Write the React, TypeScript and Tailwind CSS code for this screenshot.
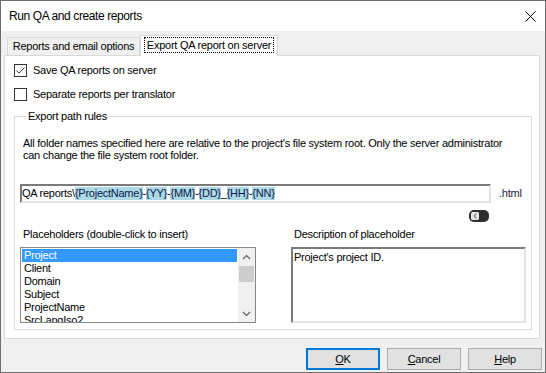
import React from "react";

function Check({ checked }: { checked?: boolean }) {
  return (
    <div className="w-[13px] h-[13px] border border-[#333333] bg-white flex items-center justify-center shrink-0">
      {checked && (
        <svg width="11" height="11" viewBox="0 0 11 11">
          <path d="M1.5 5.5 L4 8 L9.5 2.5" fill="none" stroke="#333333" strokeWidth="1" />
        </svg>
      )}
    </div>
  );
}

function Token({ t }: { t: string }) {
  return <span className="bg-[#add8e6] text-[#0a1a4a]">{t}</span>;
}

export default function App() {
  const items = ["Project", "Client", "Domain", "Subject", "ProjectName", "SrcLangIso2"];
  return (
    <div className="w-[546px] h-[373px] border border-[#6e6e6e] bg-[#f0f0f0] flex flex-col overflow-hidden font-['Liberation_Sans',Arial,sans-serif] text-[11px] leading-[13px] tracking-[-0.25px] text-black">
      {/* Title bar */}
      <div className="h-[30px] bg-white flex items-center justify-between pl-[8px] pr-[9px] shrink-0">
        <span className="text-[12px] tracking-[-0.4px]">Run QA and create reports</span>
        <svg width="11" height="11" viewBox="0 0 11 11">
          <path d="M0.5 0.5 L10.5 10.5 M10.5 0.5 L0.5 10.5" stroke="#000" strokeWidth="1" />
        </svg>
      </div>

      {/* Tabs */}
      <div className="mt-[4px] ml-[3px] flex items-end h-[20px] relative z-10 shrink-0">
        <div className="ml-[3px] w-[133px] h-[18px] border border-b-0 border-[#d9d9d9] bg-[#f0f0f0] flex items-center justify-center">
          Reports and email options
        </div>
        <div className="w-[138px] h-[21px] -mb-px border border-b-0 border-[#d9d9d9] bg-white flex items-center justify-center pb-[2px]">
          <span className="border border-dotted border-black px-[2px] leading-[14px]">Export QA report on server</span>
        </div>
      </div>

      {/* Panel */}
      <div className="ml-[3px] w-[536px] h-[284px] border border-[#d9d9d9] bg-white pl-[9px] pt-[8px] shrink-0">
        <div className="flex items-center gap-[6px] h-[13px]">
          <Check checked />
          <span>Save QA reports on server</span>
        </div>
        <div className="flex items-center gap-[6px] h-[13px] mt-[11px]">
          <Check />
          <span>Separate reports per translator</span>
        </div>

        <fieldset className="mt-[9px] w-[518px] h-[220px] border border-[#dcdcdc] pl-[5px] pr-[5px]">
          <legend className="ml-[6px] px-[2px] leading-[13px]">Export path rules</legend>
          <div className="ml-[3px] mt-[14px] leading-[12px]">
            All folder names specified here are relative to the project's file system root. Only the server administrator
            <br />
            can change the file system root folder.
          </div>

          <div className="flex items-center mt-[23px]">
            <div className="w-[471px] h-[19px] border-2 border-t-[#7a7a7a] border-l-[#7a7a7a] border-r-[#e3e3e3] border-b-[#e3e3e3] bg-white flex items-center whitespace-nowrap overflow-hidden">
              <span>QA reports\</span>
              <Token t="{ProjectName}" />
              <span>-</span>
              <Token t="{YY}" />
              <span>-</span>
              <Token t="{MM}" />
              <span>-</span>
              <Token t="{DD}" />
              <span>_</span>
              <Token t="{HH}" />
              <span>-</span>
              <Token t="{NN}" />
            </div>
            <span className="ml-[8px] text-[#1a1a40]">.html</span>
          </div>

          <div className="mt-[7px] ml-[449px] w-[20px] h-[12px]">
            <svg width="20" height="12" viewBox="0 0 20 12">
              <rect x="0" y="0" width="20" height="12" rx="5" fill="#2e2e2e" />
              <rect x="2" y="2" width="8" height="8" rx="1.5" fill="#e6e6e6" />
              <path d="M7.5 4 A2 2 0 1 0 7.5 8" fill="none" stroke="#555" strokeWidth="1" />
            </svg>
          </div>

          <div className="grid grid-cols-[236px_235px] gap-x-[35px] gap-y-[6px] mt-[6px]">
            <div className="ml-[3px]">Placeholders (double-click to insert)</div>
            <div className="ml-[3px]">Description of placeholder</div>

            <div className="h-[76px] border border-[#828790] bg-white flex overflow-hidden">
              <div className="flex-1 p-[1px] overflow-hidden">
                {items.map((it, i) => (
                  <div
                    key={it}
                    className={
                      i === 0
                        ? "h-[13px] pl-[2px] bg-[#3399ff] text-white whitespace-nowrap"
                        : "h-[13px] pl-[2px] whitespace-nowrap"
                    }
                  >
                    {it}
                  </div>
                ))}
              </div>
              <div className="w-[17px] bg-[#f0f0f0] flex flex-col items-center">
                <div className="h-[17px] w-full flex items-center justify-center">
                  <svg width="9" height="6" viewBox="0 0 9 6">
                    <path d="M1 5 L4.5 1.5 L8 5" fill="none" stroke="#606060" strokeWidth="1.2" />
                  </svg>
                </div>
                <div className="w-[15px] h-[16px] bg-[#cdcdcd] mt-[1px]" />
                <div className="flex-1" />
                <div className="h-[17px] w-full flex items-center justify-center">
                  <svg width="9" height="6" viewBox="0 0 9 6">
                    <path d="M1 1 L4.5 4.5 L8 1" fill="none" stroke="#606060" strokeWidth="1.2" />
                  </svg>
                </div>
              </div>
            </div>

            <div className="h-[76px] border-2 border-t-[#7a7a7a] border-l-[#7a7a7a] border-r-[#e3e3e3] border-b-[#e3e3e3] bg-white pl-[1px] pt-[2px]">
              Project's project ID.
            </div>
          </div>
        </fieldset>
      </div>

      {/* Buttons */}
      <div className="mt-[9px] flex justify-end gap-[7px] pr-[3px] shrink-0">
        <button className="w-[74px] h-[22px] bg-[#e1e1e1] border-2 border-[#0078d7] flex items-center justify-center">
          <span><span className="underline">O</span>K</span>
        </button>
        <button className="w-[74px] h-[22px] bg-[#e1e1e1] border border-[#adadad] flex items-center justify-center">
          <span><span className="underline">C</span>ancel</span>
        </button>
        <button className="w-[74px] h-[22px] bg-[#e1e1e1] border border-[#adadad] flex items-center justify-center">
          <span><span className="underline">H</span>elp</span>
        </button>
      </div>
    </div>
  );
}
